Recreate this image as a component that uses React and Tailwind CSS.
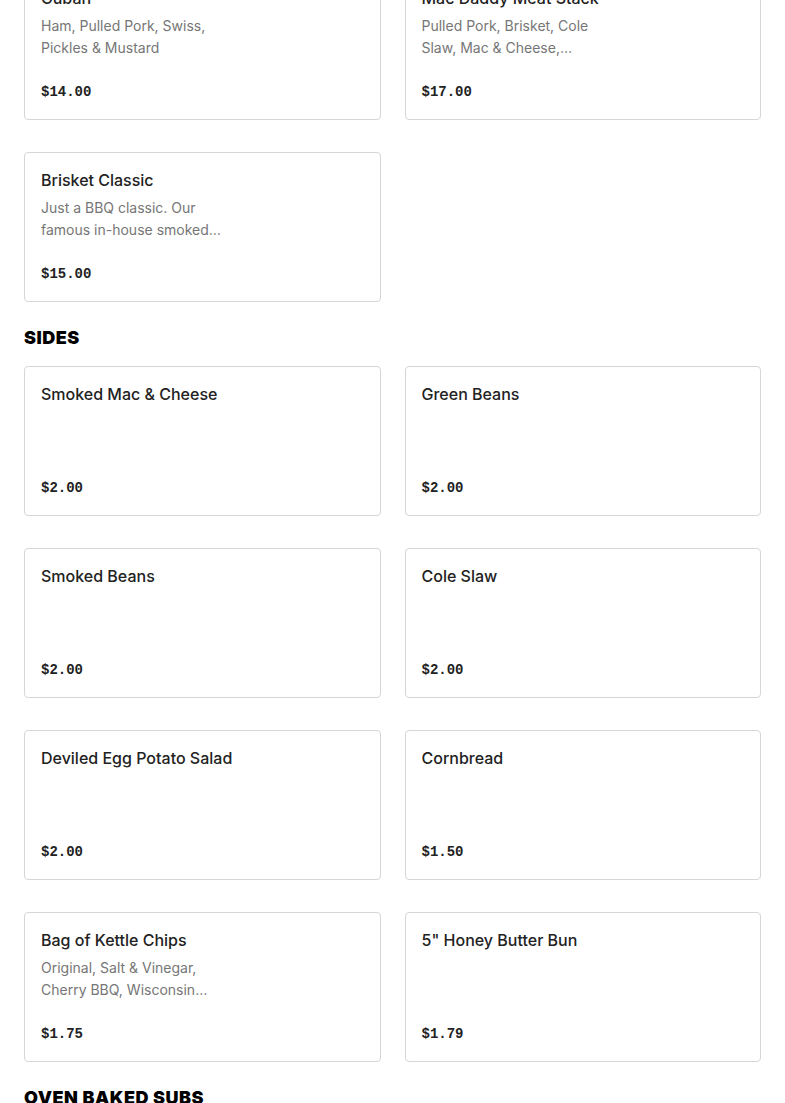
import React from "react";

const top = [
  { name: "Cuban", desc: "Ham, Pulled Pork, Swiss, Pickles & Mustard", price: "$14.00" },
  { name: "Mac Daddy Meat Stack", desc: "Pulled Pork, Brisket, Cole Slaw, Mac & Cheese, Pickles, Onion Straws", price: "$17.00" },
  { name: "Brisket Classic", desc: "Just a BBQ classic. Our famous in-house smoked brisket on a bun", price: "$15.00" },
];

const sides = [
  { name: "Smoked Mac & Cheese", price: "$2.00" },
  { name: "Green Beans", price: "$2.00" },
  { name: "Smoked Beans", price: "$2.00" },
  { name: "Cole Slaw", price: "$2.00" },
  { name: "Deviled Egg Potato Salad", price: "$2.00" },
  { name: "Cornbread", price: "$1.50" },
  { name: "Bag of Kettle Chips", desc: "Original, Salt & Vinegar, Cherry BBQ, Wisconsin Cheddar", price: "$1.75" },
  { name: '5" Honey Butter Bun', price: "$1.79" },
];

function Card({ item }) {
  return (
    <div className="h-[150px] rounded-[4px] border border-[#d6d6d6] bg-white px-4 pt-[15px] pb-[17px] flex flex-col">
      <div className="text-[16px] leading-[24px] font-medium text-[#222]" style={{ fontFamily: "Inter, 'Liberation Sans', sans-serif" }}>
        {item.name}
      </div>
      {item.desc && (
        <div
          className="mt-[5px] w-[190px] text-[14px] leading-[22px] text-[#767676] line-clamp-2"
          style={{ fontFamily: "Inter, 'Liberation Sans', sans-serif" }}
        >
          {item.desc}
        </div>
      )}
      <div className="mt-auto text-[14px] leading-[20px] font-bold text-[#222]" style={{ fontFamily: "'Liberation Mono', monospace" }}>
        {item.price}
      </div>
    </div>
  );
}

function Heading({ children }) {
  return (
    <h2
      className="mt-6 mb-4 text-[18px] leading-[24px] font-black tracking-[0.5px] text-black uppercase"
      style={{ fontFamily: "Inter, 'Liberation Sans', sans-serif" }}
    >
      {children}
    </h2>
  );
}

export default function App() {
  return (
    <div className="bg-white min-h-screen overflow-hidden">
      <div className="px-6 -mt-[30px]">
        <div className="grid grid-cols-2 gap-x-6 gap-y-8">
          {top.map((it) => (
            <Card key={it.name} item={it} />
          ))}
        </div>
        <Heading>Sides</Heading>
        <div className="grid grid-cols-2 gap-x-6 gap-y-8">
          {sides.map((it) => (
            <Card key={it.name} item={it} />
          ))}
        </div>
        <Heading>Oven Baked Subs</Heading>
      </div>
    </div>
  );
}
